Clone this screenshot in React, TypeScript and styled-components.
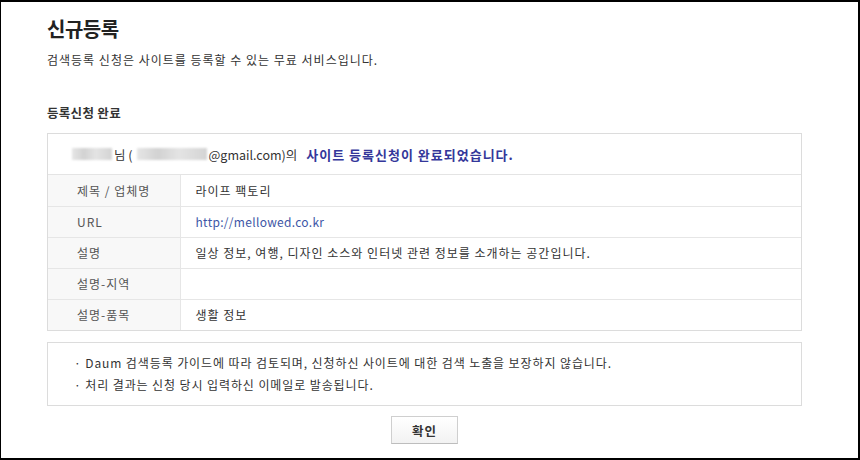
import React from "react";
import styled, { createGlobalStyle } from "styled-components";

const GlobalStyle = createGlobalStyle`
  html, body { margin: 0; padding: 0; background: #fff; }
  body {
    font-family: "Noto Sans CJK KR", "Noto Sans", sans-serif;
    color: #333;
  }
  * { box-sizing: border-box; }
`;

const Frame = styled.div`
  width: 860px;
  height: 460px;
  border-style: solid;
  border-color: #000;
  border-width: 2px 2px 2px 1px;
  padding: 12px 0 0 46px;
  overflow: hidden;
`;

const Content = styled.div`
  width: 755px;
  display: flex;
  flex-direction: column;
`;

const Title = styled.h1`
  margin: 0;
  font-size: 20px;
  line-height: 30px;
  font-weight: 700;
  color: #222;
  letter-spacing: -0.5px;
`;

const Subtitle = styled.p`
  margin: 7px 0 0;
  font-size: 12px;
  line-height: 18px;
  color: #333;
  letter-spacing: 1px;
`;

const SectionTitle = styled.h2`
  margin: 35px 0 0;
  font-size: 12.5px;
  line-height: 18px;
  font-weight: 700;
  color: #333;
  letter-spacing: 0.3px;
`;

const Box = styled.div`
  margin-top: 11px;
  border: 1px solid #dcdcdc;
`;

const Message = styled.div`
  height: 41px;
  display: flex;
  align-items: center;
  padding-left: 24px;
  font-size: 12.5px;
  color: #333;
  border-bottom: 1px solid #e4e4e4;
`;

const Blur = styled.span<{ $w: number; $gap: number }>`
  display: inline-block;
  width: ${(p) => p.$w}px;
  height: 12px;
  background: linear-gradient(90deg, #e6e6e6, #d2d2d2 30%, #e4e4e4 60%, #d4d4d4);
  filter: blur(1px);
  margin-left: ${(p) => p.$gap}px;
  margin-right: 2px;
`;

const Strong = styled.strong`
  color: #34379a;
  font-weight: 700;
  font-size: 13px;
  margin-left: 9px;
  letter-spacing: 1px;
`;

const Table = styled.table`
  width: 100%;
  border-collapse: collapse;
  font-size: 12px;
  letter-spacing: 1px;
`;

const Row = styled.tr`
  height: 31px;
  & + & th, & + & td { border-top: 1px solid #e6e6e6; }
`;

const Label = styled.th`
  width: 132px;
  text-align: left;
  font-weight: 400;
  padding: 0 0 0 29px;
  background: #f8f8f8;
  color: #555;
  border-right: 1px solid #e6e6e6;
`;

const Value = styled.td`
  padding: 0 0 0 15px;
  color: #333;
`;

const Link = styled.a`
  color: #3d56a6;
  text-decoration: none;
  letter-spacing: 0.3px;
`;

const Notice = styled.ul`
  margin: 11px 0 0;
  padding: 9px 0 9px 26px;
  list-style: none;
  border: 1px solid #dcdcdc;
  font-size: 12px;
  line-height: 22px;
  color: #333;
  letter-spacing: 0.9px;
`;

const NoticeItem = styled.li`
  &::before { content: "· "; }
`;

const Actions = styled.div`
  display: flex;
  justify-content: center;
  margin-top: 10px;
`;

const Button = styled.button`
  width: 67px;
  height: 28px;
  border: 1px solid #cfcfcf;
  border-bottom-color: #bdbdbd;
  background: linear-gradient(#ffffff, #f2f2f2);
  font-family: inherit;
  font-size: 12.5px;
  font-weight: 700;
  color: #333;
  padding: 0;
  letter-spacing: 1px;
  cursor: pointer;
`;

const rows: { label: string; value: React.ReactNode }[] = [
  { label: "제목 / 업체명", value: "라이프 팩토리" },
  { label: "URL", value: <Link href="#">http://mellowed.co.kr</Link> },
  { label: "설명", value: "일상 정보, 여행, 디자인 소스와 인터넷 관련 정보를 소개하는 공간입니다." },
  { label: "설명-지역", value: "" },
  { label: "설명-품목", value: "생활 정보" },
];

export default function App() {
  return (
    <>
      <GlobalStyle />
      <Frame>
        <Content>
          <Title>신규등록</Title>
          <Subtitle>검색등록 신청은 사이트를 등록할 수 있는 무료 서비스입니다.</Subtitle>
          <SectionTitle>등록신청 완료</SectionTitle>
          <Box>
            <Message>
              <Blur $w={40} $gap={0} />님 (<Blur $w={70} $gap={4} />@gmail.com)의
              <Strong>사이트 등록신청이 완료되었습니다.</Strong>
            </Message>
            <Table>
              <tbody>
                {rows.map((r) => (
                  <Row key={r.label}>
                    <Label>{r.label}</Label>
                    <Value>{r.value}</Value>
                  </Row>
                ))}
              </tbody>
            </Table>
          </Box>
          <Notice>
            <NoticeItem>Daum 검색등록 가이드에 따라 검토되며, 신청하신 사이트에 대한 검색 노출을 보장하지 않습니다.</NoticeItem>
            <NoticeItem>처리 결과는 신청 당시 입력하신 이메일로 발송됩니다.</NoticeItem>
          </Notice>
          <Actions>
            <Button>확인</Button>
          </Actions>
        </Content>
      </Frame>
    </>
  );
}
